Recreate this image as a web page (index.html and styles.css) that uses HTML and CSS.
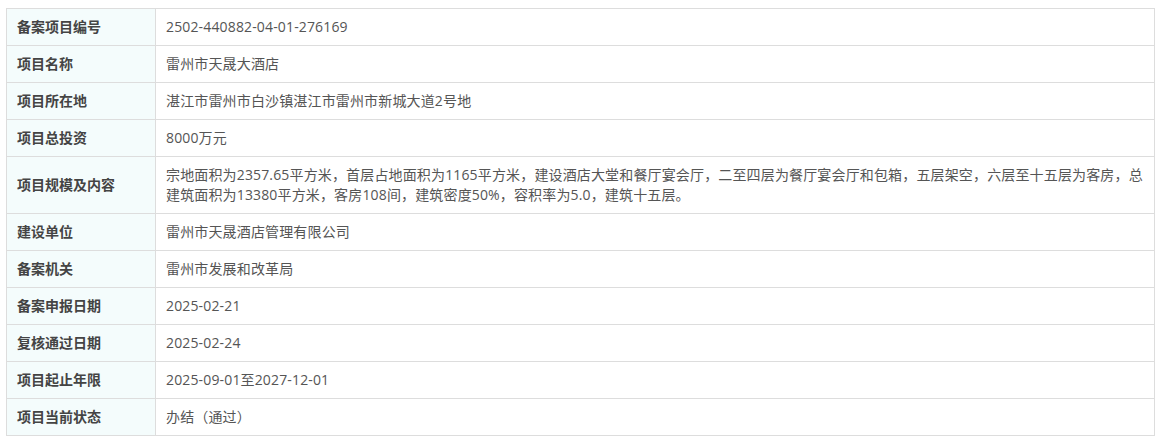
FILE: index.html
```html
<!DOCTYPE html>
<html lang="zh-CN">
<head>
  <meta charset="UTF-8">
  <title>备案项目信息</title>
  <link rel="stylesheet" href="styles.css">
</head>
<body>
<table class="info-table">
  <tr><th>备案项目编号</th><td>2502-440882-04-01-276169</td></tr>
  <tr><th>项目名称</th><td>雷州市天晟大酒店</td></tr>
  <tr><th>项目所在地</th><td>湛江市雷州市白沙镇湛江市雷州市新城大道2号地</td></tr>
  <tr><th>项目总投资</th><td>8000万元</td></tr>
  <tr><th>项目规模及内容</th><td>宗地面积为2357.65平方米，首层占地面积为1165平方米，建设酒店大堂和餐厅宴会厅，二至四层为餐厅宴会厅和包箱，五层架空，六层至十五层为客房，总建筑面积为13380平方米，客房108间，建筑密度50%，容积率为5.0，建筑十五层。</td></tr>
  <tr><th>建设单位</th><td>雷州市天晟酒店管理有限公司</td></tr>
  <tr><th>备案机关</th><td>雷州市发展和改革局</td></tr>
  <tr><th>备案申报日期</th><td>2025-02-21</td></tr>
  <tr><th>复核通过日期</th><td>2025-02-24</td></tr>
  <tr><th>项目起止年限</th><td>2025-09-01至2027-12-01</td></tr>
  <tr><th>项目当前状态</th><td>办结（通过）</td></tr>
</table>
</body>
</html>
```

FILE: styles.css
```css
body {
  margin: 0;
  padding: 8px 3px 0 6px;
  background: #ffffff;
  font-family: "Open Sans", "Noto Sans CJK SC", sans-serif;
  font-size: 14px;
}

.info-table {
  width: 1149px;
  border-collapse: collapse;
  table-layout: fixed;
}

.info-table th,
.info-table td {
  border: 1px solid #dddddd;
  padding: 8px 9px 8px 10px;
  line-height: 20px;
  text-align: left;
  vertical-align: middle;
}

.info-table th {
  width: 129px;
  background: #f4fcfc;
  color: #444444;
  font-weight: bold;
}

.info-table td {
  color: #555555;
  letter-spacing: 0.15px;
}
```
